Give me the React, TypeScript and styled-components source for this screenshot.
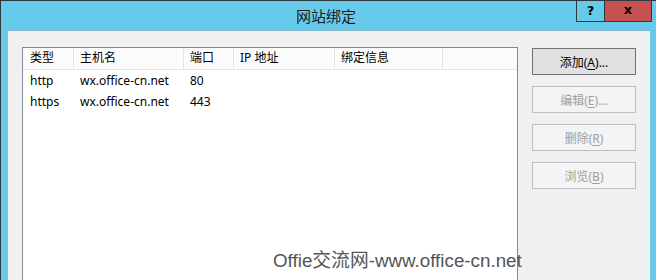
import React from "react";
import styled, { createGlobalStyle } from "styled-components";

const GlobalStyle = createGlobalStyle`
  html, body {
    margin: 0;
    padding: 0;
    background: #ffffff;
  }
  body {
    font-family: "Segoe UI", "Noto Sans", "Noto Sans CJK SC", sans-serif;
    font-size: 12px;
    color: #000;
  }
`;

interface Binding {
  type: string;
  host: string;
  port: string;
  ip: string;
  info: string;
}

const bindings: Binding[] = [
  { type: "http", host: "wx.office-cn.net", port: "80", ip: "", info: "" },
  { type: "https", host: "wx.office-cn.net", port: "443", ip: "", info: "" },
];

const columns = [
  { title: "类型", width: 51 },
  { title: "主机名", width: 110 },
  { title: "端口", width: 50 },
  { title: "IP 地址", width: 101 },
  { title: "绑定信息", width: 108 },
];

const actions = [
  { label: "添加", key: "A", more: true, enabled: true },
  { label: "编辑", key: "E", more: true, enabled: false },
  { label: "删除", key: "R", more: false, enabled: false },
  { label: "浏览", key: "B", more: false, enabled: false },
];

export default function App() {
  return (
    <>
      <GlobalStyle />
      <Window>
        <TitleBar>
          <span />
          <Title>网站绑定</Title>
          <Controls>
            <HelpButton>?</HelpButton>
            <CloseButton>x</CloseButton>
          </Controls>
        </TitleBar>
        <Body>
          <ListView>
            <HeaderRow>
              {columns.map((c) => (
                <HeaderCell key={c.title} style={{ width: c.width }}>
                  {c.title}
                </HeaderCell>
              ))}
              <HeaderFill />
            </HeaderRow>
            {bindings.map((b) => (
              <Row key={b.type}>
                {[b.type, b.host, b.port, b.ip, b.info].map((v, i) => (
                  <Cell key={i} style={{ width: columns[i].width }}>
                    {v}
                  </Cell>
                ))}
              </Row>
            ))}
          </ListView>
          <ButtonColumn>
            {actions.map((a) => (
              <ActionButton key={a.key} disabled={!a.enabled} $enabled={a.enabled}>
                {a.label}(<u>{a.key}</u>){a.more ? "..." : ""}
              </ActionButton>
            ))}
          </ButtonColumn>
        </Body>
        <Watermark>Offie交流网-www.office-cn.net</Watermark>
      </Window>
    </>
  );
}

const Window = styled.div`
  position: relative;
  height: 279px;
  display: flex;
  flex-direction: column;
  background: #66caeb;
  border-top: 1px solid #2f3a40;
  border-left: 1px solid #2f3a40;
  overflow: hidden;
`;

const TitleBar = styled.div`
  height: 29px;
  display: grid;
  grid-template-columns: 1fr auto 1fr;
  align-items: start;
  padding-right: 4px;
`;

const Title = styled.div`
  font-family: "Noto Sans CJK SC", sans-serif;
  font-size: 15px;
  line-height: 29px;
  color: #1b1b1b;
  margin-left: -1px;
`;

const Controls = styled.div`
  display: flex;
  justify-content: flex-end;
  margin-top: -1px;
`;

const HelpButton = styled.div`
  width: 27px;
  height: 20px;
  border: 1px solid #2f3a40;
  background: #66caeb;
  font-family: "DejaVu Sans", sans-serif;
  font-weight: bold;
  font-size: 13px;
  line-height: 20px;
  text-align: center;
  color: #000;
`;

const CloseButton = styled.div`
  width: 46px;
  height: 20px;
  border: 1px solid #2f3a40;
  border-left: none;
  background: #c75050;
  font-family: "DejaVu Sans", sans-serif;
  font-weight: bold;
  font-size: 13px;
  line-height: 18px;
  text-align: center;
  color: #000;
`;

const Body = styled.div`
  flex: 1;
  display: flex;
  gap: 14px;
  margin: 0 6px 0 7px;
  padding: 16px 15px 0 14px;
  background: #f0f0f0;
  border-top: 1px solid #83b3cb;
`;

const ListView = styled.div`
  width: 494px;
  height: 260px;
  flex-shrink: 0;
  background: #ffffff;
  border: 1px solid #828790;
`;

const HeaderRow = styled.div`
  display: flex;
  height: 21px;
  border-bottom: 1px solid #e5e5e5;
  background: #fcfcfc;
`;

const HeaderCell = styled.div`
  box-sizing: border-box;
  height: 21px;
  padding-left: 6px;
  border-right: 1px solid #e5e5e5;
  line-height: 20px;
  white-space: nowrap;
  color: #000;
  &:first-child {
    padding-left: 7px;
  }
`;

const HeaderFill = styled.div`
  flex: 1;
`;

const Row = styled.div`
  display: flex;
  height: 21px;
`;

const Cell = styled.div`
  box-sizing: border-box;
  padding-left: 6px;
  line-height: 21px;
  white-space: nowrap;
  &:first-child {
    padding-left: 7px;
  }
`;

const ButtonColumn = styled.div`
  display: flex;
  flex-direction: column;
  gap: 11px;
  padding-top: 1px;
`;

const ActionButton = styled.button<{ $enabled: boolean }>`
  width: 104px;
  height: 27px;
  padding: 0;
  font-family: "Segoe UI", "Noto Sans", "Noto Sans CJK SC", sans-serif;
  font-size: 12px;
  background: ${(p) => (p.$enabled ? "#e1e1e1" : "#f4f4f4")};
  border: 1px solid ${(p) => (p.$enabled ? "#707070" : "#bfbfbf")};
  color: ${(p) => (p.$enabled ? "#000000" : "#a0a0a0")};
  u {
    text-underline-offset: 2px;
  }
`;

const Watermark = styled.div`
  position: absolute;
  left: 272px;
  top: 244px;
  font-family: "Liberation Sans", "Noto Sans CJK SC", sans-serif;
  font-size: 18.8px;
  color: #555555;
  white-space: nowrap;
`;
